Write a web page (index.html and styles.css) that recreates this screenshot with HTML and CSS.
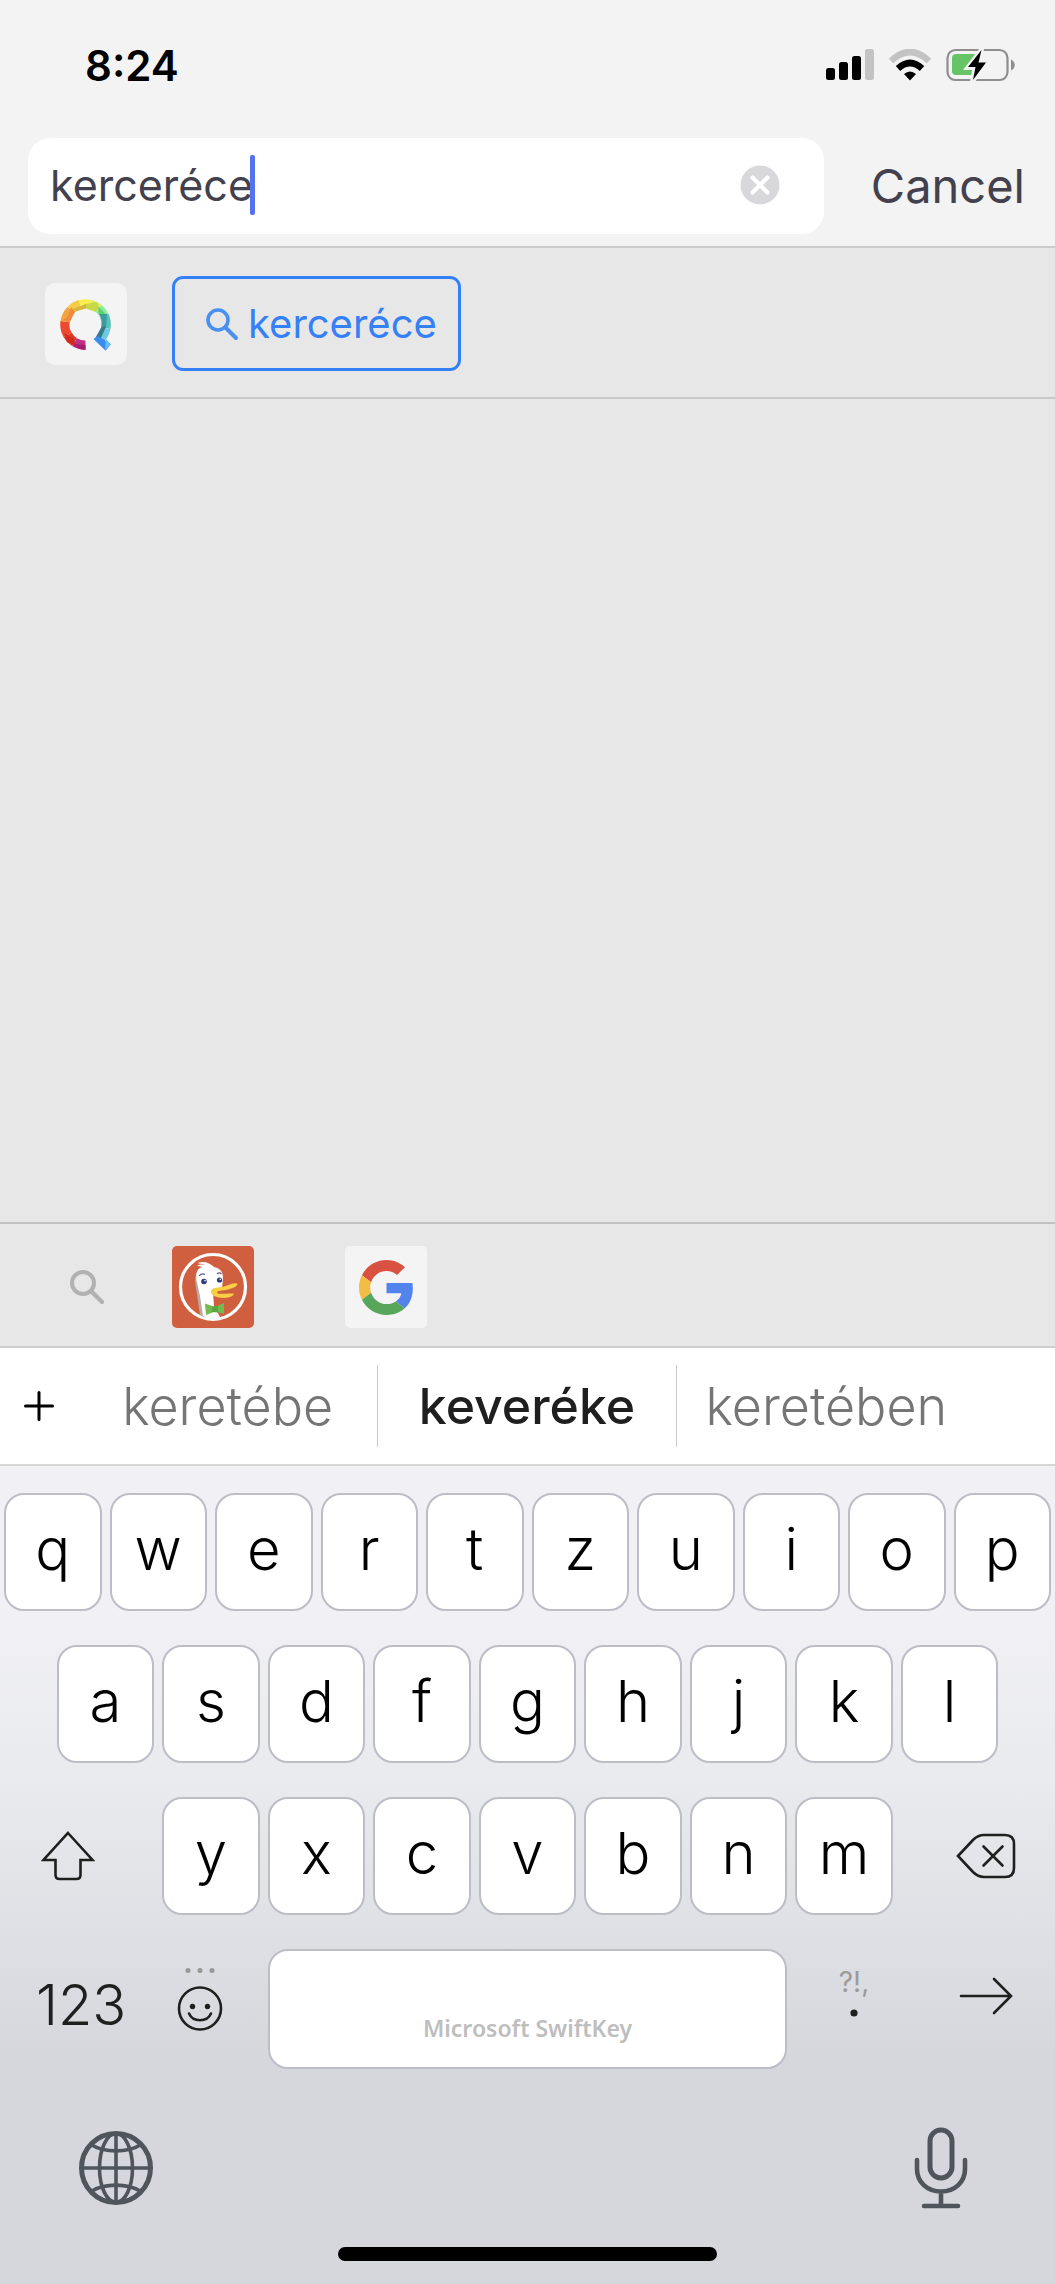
FILE: index.html
```
<!DOCTYPE html>
<html lang="hu">
<head>
<meta charset="utf-8">
<meta name="viewport" content="width=device-width, initial-scale=1">
<title>Search</title>
<link rel="stylesheet" href="styles.css">
</head>
<body>
<header class="top">
  <div class="status">
    <time class="status-time">8:24</time>
    <div class="status-icons">
      <svg width="48" height="32" viewBox="0 0 48 32" aria-hidden="true">
        <rect x="0" y="19" width="9" height="12" rx="2.500"/>
        <rect x="13" y="13" width="9" height="18" rx="2.500"/>
        <rect x="26" y="7" width="9" height="24" rx="2.500"/>
        <rect x="39" y="0" width="9" height="31" rx="2.500" fill="#c3c3c3"/>
      </svg>
      <svg width="44" height="32" viewBox="0 0 44 32" fill="none" aria-hidden="true">
        <path d="M3 12Q22 -6 41 12" stroke="#c3c3c3" stroke-width="6.500"/>
        <path d="M10 19.500Q22 8.500 34 19.500" stroke="#000" stroke-width="6.500"/>
        <path d="M16 25Q22 20 28 25L22 31.500Z" fill="#000"/>
      </svg>
      <svg width="70" height="34" viewBox="0 0 70 34" aria-hidden="true">
        <rect x="1.500" y="2" width="60" height="30" rx="8" fill="none" stroke="#8e8e8e" stroke-width="2.200"/>
        <path d="M65 11.500C70 14 70 20 65 22.500Z" fill="#8e8e8e"/>
        <rect x="6" y="6" width="26" height="21" rx="4" fill="#65c466"/>
        <path d="M33 1L17 22H26L24 34H29L43 14H36L38 1Z" fill="#f3f3f3"/>
        <path d="M35.500 2L22 19H29.500L27 32L40 14.500H32.500Z"/>
      </svg>
    </div>
  </div>
  <form class="search">
    <div class="field">
      <input class="field-input" type="text" aria-label="Search or enter address" value="kerceréce">
      <span class="caret"></span>
      <button class="clear" type="button" aria-label="Clear">
        <svg width="40" height="40" viewBox="0 0 40 40"><circle cx="20" cy="20" r="19.500" fill="#d8d8db"/><path d="M12.500 12.500L27.500 27.500M27.500 12.500L12.500 27.500" stroke="#fff" stroke-width="4.200" stroke-linecap="round"/></svg>
      </button>
    </div>
    <button class="cancel" type="button">Cancel</button>
  </form>
</header>

<main class="results">
  <section class="suggest">
    <span class="tile">
      <svg width="82" height="82" viewBox="0 0 82 82" fill="none" stroke-width="9.200" role="img" aria-label="Qwant">
        <path d="M40.500 62.200A20.700 20.700 0 0 1 29.500 59.100" stroke="#bf3187"/>
        <path d="M29.500 59.100A20.700 20.700 0 0 1 22.600 51.900" stroke="#e23a28"/>
        <path d="M22.600 51.900A20.700 20.700 0 0 1 20 38.600" stroke="#eb4930"/>
        <path d="M20 38.600A20.700 20.700 0 0 1 25.900 26.900" stroke="#f2a63f"/>
        <path d="M25.900 26.900A20.700 20.700 0 0 1 35.100 21.500" stroke="#f6cb45"/>
        <path d="M35.100 21.500A20.700 20.700 0 0 1 45.900 21.500" stroke="#f9ee4e"/>
        <path d="M45.900 21.500A20.700 20.700 0 0 1 53.800 25.600" stroke="#d8f060"/>
        <path d="M53.800 25.600A20.700 20.700 0 0 1 59.300 32.800" stroke="#8eee98"/>
        <path d="M59.300 32.800A20.700 20.700 0 0 1 60.900 45.100" stroke="#54c3b8"/>
        <path d="M60.900 45.100A20.700 20.700 0 0 1 55.100 56.100" stroke="#6ccbdc"/>
        <g stroke="none">
          <path d="M18 37L24.500 40L30 28.500L26 24L23 33Z" fill="#f08a3c"/>
          <path d="M28 26L41 21L52 19L54 25L51 29L41 25.500L31 28Z" fill="#c9d84a"/>
          <path d="M28 26L41 21L41 25.500L31 28Z" fill="#d9b33f"/>
          <path d="M53.500 23.500L61 31.500L53.500 31Z" fill="#5bd070"/>
          <path d="M54 31H62L61 44L55 57L51 54L56.500 45L57 37Z" fill="#3f9aa0"/>
          <path d="M61 43L55 57L51 54L56.500 44Z" fill="#377a90"/>
          <path d="M19 50L28 55L31 63L22 59Z" fill="#d02a20"/>
          <path d="M28 61L40.500 62V67L34 66Z" fill="#a61d6f"/>
          <path d="M48.500 56L52 53L58 56L65.700 61.300L60.600 67.700Z" fill="#3a8cf0"/>
          <path d="M60 67L61 56L65.700 61.300Z" fill="#5cc3fb"/>
        </g>
      </svg>
    </span>
    <button class="chip" type="button">
      <svg width="34" height="34" viewBox="0 0 34 34" fill="none" stroke="#4a8ff2" stroke-linecap="round" aria-hidden="true"><circle cx="13" cy="13" r="10" stroke-width="3.600"/><path d="M20.500 20.500L31 31" stroke-width="4"/></svg>
      <span>kerceréce</span>
    </button>
  </section>
  <section class="empty"></section>
  <nav class="engines" aria-label="Search engines">
    <button class="engine engine-plain" type="button" aria-label="Search settings">
      <svg width="36" height="36" viewBox="0 0 36 36" fill="none" stroke="#b1b1b1" stroke-linecap="round"><circle cx="14" cy="14" r="11" stroke-width="4"/><path d="M22 22L33 33" stroke-width="4.200"/></svg>
    </button>
    <button class="engine engine-duck" type="button" aria-label="DuckDuckGo">
      <svg width="82" height="82" viewBox="0 0 82 82">
        <circle cx="41" cy="41" r="32.500" fill="none" stroke="#fff" stroke-width="3.200"/>
        <path d="M24 27L23 35L28 69L32 71L28 30Z" fill="#b9aaa4"/>
        <path d="M25 20C28 18 31 18.500 33 19C31 17.500 27 18 25.500 17C32 14.500 38 17 42 21C48 22 51 26 51 32L50 42L41 46L42 60L48 71C43 73.500 36 73 31 70L28 50L24.500 34C23.500 26 26 22 30 21C28 20 26 20 25 20Z" fill="#fff"/>
        <path d="M27 30C29 27.500 31 27.500 33 28.500M45 28C46.500 26.500 48.500 27 49.500 28" fill="none" stroke="#5b5f9a" stroke-width="1.200"/>
        <circle cx="32" cy="35.500" r="2.800" fill="#2e3c80"/><circle cx="47.500" cy="34" r="2.600" fill="#2e3c80"/>
        <circle cx="33" cy="34.600" r=".8" fill="#fff"/><circle cx="48.300" cy="33.200" r=".8" fill="#fff"/>
        <path d="M39 45C40 41.500 46 41.500 52 40.500C57 39 61 36.500 65 37.500C67 39.500 60 43 54 44C49 45 45 45 45 46.500C46 49 55 47 61 47.500C64 48.500 58 52 52 52C44 52 38 49 39 45Z" fill="#f8cf47"/>
        <path d="M33 57.500L43 61L52 57V68L43 65.500L34 69Z" fill="#72bb50"/>
        <path d="M40 60.500L46 60V66.500L40 66Z" fill="#5ba63e"/>
      </svg>
    </button>
    <button class="engine engine-google" type="button" aria-label="Google">
      <svg width="55" height="55" viewBox="0 0 48 48">
        <path fill="#d95140" d="M24 9.500c3.540 0 6.710 1.220 9.210 3.600l6.850-6.850C35.900 2.380 30.470 0 24 0 14.620 0 6.510 5.380 2.560 13.220l7.980 6.190C12.430 13.720 17.740 9.500 24 9.500z"/>
        <path fill="#5383ec" d="M46.980 24.550c0-1.570-.15-3.090-.38-4.550H24v9.020h12.940c-.58 2.960-2.260 5.480-4.780 7.180l7.730 6c4.510-4.180 7.090-10.360 7.090-17.650z"/>
        <path fill="#f1bd42" d="M10.530 28.590c-.48-1.450-.76-2.990-.76-4.590s.27-3.140.76-4.590l-7.980-6.190C.92 16.460 0 20.120 0 24c0 3.880.92 7.540 2.560 10.780l7.970-6.190z"/>
        <path fill="#58a65c" d="M24 48c6.480 0 11.930-2.130 15.890-5.810l-7.730-6c-2.150 1.450-4.920 2.300-8.160 2.300-6.260 0-11.570-4.220-13.470-9.910l-7.980 6.190C6.510 42.620 14.620 48 24 48z"/>
      </svg>
    </button>
  </nav>
</main>

<div class="candidates">
  <button class="more" type="button" aria-label="Open toolbar">
    <svg width="30" height="30" viewBox="0 0 30 30" stroke="#000" stroke-width="3" stroke-linecap="round"><path d="M15 1.500V28.500M1.500 15H28.500"/></svg>
  </button>
  <button class="candidate" type="button">keretébe</button>
  <button class="candidate candidate-main" type="button">keveréke</button>
  <button class="candidate" type="button">keretében</button>
</div>

<section class="keyboard" aria-label="Keyboard">
  <div class="row">
    <button class="key">q</button><button class="key">w</button><button class="key">e</button><button class="key">r</button><button class="key">t</button><button class="key">z</button><button class="key">u</button><button class="key">i</button><button class="key">o</button><button class="key">p</button>
  </div>
  <div class="row row-home">
    <button class="key">a</button><button class="key">s</button><button class="key">d</button><button class="key">f</button><button class="key">g</button><button class="key">h</button><button class="key">j</button><button class="key">k</button><button class="key">l</button>
  </div>
  <div class="row">
    <button class="fn fn-wide toward-left" aria-label="Shift">
      <svg width="54" height="50" viewBox="0 0 54 50" fill="none" stroke="#1e1f1e" stroke-width="2.600"><path d="M27 2L51.500 29H39.500V44Q39.500 48 35.500 48H18.500Q14.500 48 14.500 44V29H2.500Z"/></svg>
    </button>
    <button class="key">y</button><button class="key">x</button><button class="key">c</button><button class="key">v</button><button class="key">b</button><button class="key">n</button><button class="key">m</button>
    <button class="fn fn-wide toward-right" aria-label="Backspace">
      <svg width="60" height="46" viewBox="0 0 60 46" fill="none" stroke="#1e1f1e" stroke-width="2.600" stroke-linecap="round"><path d="M2 23L17 7Q22 2 28 2H49Q58 2 58 11V35Q58 44 49 44H28Q22 44 17 39Z"/><path d="M27.500 13.500L46.500 32.500M46.500 13.500L27.500 32.500"/></svg>
    </button>
  </div>
  <div class="row">
    <button class="fn fn-wide fn-text">123</button>
    <button class="fn fn-emoji toward-left" aria-label="Emoji">
      <svg width="46" height="64" viewBox="0 0 46 64" fill="none" stroke="#1e1f1e" stroke-width="2.600" stroke-linecap="round"><g fill="#979797" stroke="none"><circle cx="11" cy="3.500" r="2.500"/><circle cx="23" cy="3.500" r="2.500"/><circle cx="35" cy="3.500" r="2.500"/></g><circle cx="23" cy="41.500" r="21"/><path d="M12 46.500C16 55.500 30 55.500 34 46.500"/><g fill="#1e1f1e" stroke="none"><circle cx="15.500" cy="39.500" r="2.700"/><circle cx="30.500" cy="39.500" r="2.700"/></g></svg>
    </button>
    <button class="key key-space">Microsoft SwiftKey</button>
    <button class="fn fn-punct toward-right"><span class="hint">?!,</span><svg width="8" height="8" viewBox="0 0 8 8" role="img" aria-label="Period"><circle cx="4" cy="4" r="3.600" fill="#1e1f1e"/></svg></button>
    <button class="fn fn-wide fn-go toward-right" aria-label="Go">
      <svg width="54" height="38" viewBox="0 0 54 38" fill="none" stroke="#1e1f1e" stroke-width="2.600" stroke-linecap="round"><path d="M2 19H51M35 2L52 19L35 36"/></svg>
    </button>
  </div>
  <div class="dock">
    <button class="dock-button" aria-label="Next keyboard">
      <svg width="74" height="76" viewBox="0 0 74 76" fill="none" stroke="#50555c" stroke-width="3.600"><circle cx="37" cy="38" r="34.500" stroke-width="5"/><path d="M37 3V73M2 38H72"/><ellipse cx="37" cy="38" rx="16.500" ry="34.500"/><path d="M12 14.500C25 23 49 23 62 14.500M12 61.500C25 53 49 53 62 61.500"/></svg>
    </button>
    <button class="dock-button" aria-label="Dictate">
      <svg width="54" height="82" viewBox="0 0 54 82" fill="none" stroke="#50555c" stroke-width="5" stroke-linecap="round"><rect x="16" y="3" width="22" height="48" rx="11"/><path d="M3 33V42C3 55 13 64.500 27 64.500S51 55 51 42V33M27 65V78M10 79H44" stroke-width="4.600"/></svg>
    </button>
  </div>
  <div class="home-bar"></div>
</section>
</body>
</html>
```
FILE: styles.css
```
* { box-sizing: border-box; }

body {
  margin: 0;
  min-height: 100vh;
  display: flex;
  flex-direction: column;
  background: #e7e7e7;
  color: #000;
  font-family: Inter, "Liberation Sans", sans-serif;
}

button {
  margin: 0;
  padding: 0;
  border: 0;
  background: none;
  color: inherit;
  font: inherit;
}

svg { display: block; flex: none; }

/* Status bar and address field */
.top {
  background: #f3f3f3;
  border-bottom: 2px solid #cbcbcb;
}

.status {
  display: flex;
  justify-content: space-between;
  align-items: center;
  height: 138px;
  padding: 0 39px 8px 85px;
}

.status-time { font-size: 42px; font-weight: 600; }

.status-icons { display: flex; align-items: center; gap: 14px; }

.search {
  display: flex;
  align-items: center;
  gap: 47px;
  padding: 0 30px 12px 28px;
}

.field {
  flex: 1;
  min-width: 0;
  display: flex;
  align-items: center;
  height: 96px;
  padding: 0 44px 2px 22px;
  border-radius: 22px;
  background: #fff;
}

.field-input {
  field-sizing: content;
  padding: 0;
  border: 0;
  outline: 0;
  background: none;
  color: #42414d;
  font: 400 43px/56px Inter, "Liberation Sans", sans-serif;
}

.caret {
  width: 5px;
  height: 60px;
  margin-left: -3px;
  border-radius: 2px;
  background: #5573ec;
}

.clear { margin-left: auto; }

.cancel { color: #42414d; font-size: 47px; line-height: 64px; }

/* Suggestions */
.results { flex: 1; display: flex; flex-direction: column; }

.suggest {
  display: flex;
  align-items: center;
  gap: 45px;
  padding: 28px 45px 26px;
  border-bottom: 2px solid #c8c8c8;
}

.tile { border-radius: 10px; background: #f4f4f4; }

.chip {
  display: flex;
  align-items: center;
  gap: 9px;
  height: 95px;
  padding: 0 21px 0 30px;
  border: 3px solid #3580f7;
  border-radius: 11px;
  color: #3580f7;
  font-size: 40px;
}

.empty { flex: 1; border-bottom: 2px solid #c2c2c2; }

.engines {
  display: flex;
  gap: 91px;
  height: 124px;
  padding: 22px 0 0 46px;
  border-bottom: 2px solid #cecece;
}

.engine {
  display: flex;
  justify-content: center;
  align-items: center;
  width: 82px;
  height: 82px;
  border-radius: 5px;
}

.engine-plain { margin-right: -47px; }
.engine-duck { background: #cf5f3e; }
.engine-google { background: #f4f4f4; }

/* Word predictions */
.candidates {
  display: grid;
  grid-template-columns: 78px 1fr 1fr 1fr 79px;
  align-items: center;
  height: 118px;
  border-bottom: 2px solid #d6d6d6;
  background: #fff;
}

.more { justify-self: center; }

.candidate {
  height: 82px;
  color: #757575;
  font-size: 52px;
  font-weight: 300;
}

.candidate-main {
  border: solid #c9c9c9;
  border-width: 0 1px;
  color: #1e1f1e;
  font-size: 50px;
  font-weight: 500;
}

/* Keys */
.keyboard {
  padding: 27px 0 23px;
  background: linear-gradient(#f0f0f5 150px, #e9eaee 320px, #dedfe4 480px, #d6d7dc 590px);
}

.row {
  display: grid;
  grid-template-columns: repeat(20, 1fr);
  margin-bottom: 34px;
}

.row-home { padding: 0 5%; grid-template-columns: repeat(18, 1fr); }

.key {
  grid-column: span 2;
  height: 118px;
  margin: 0 4px;
  padding-bottom: 6px;
  border: 2px solid #bcbdc6;
  border-radius: 20px;
  background: #fff;
  font-size: 58px;
  font-weight: 300;
}

.key-space {
  grid-column: span 10;
  height: 120px;
  padding: 38px 0 0;
  color: #bebebe;
  font: 600 23px "Noto Sans", "Open Sans", sans-serif;
}

.fn {
  grid-column: span 2;
  display: flex;
  flex-direction: column;
  justify-content: center;
  align-items: center;
  color: #1e1f1e;
}

.fn-wide { grid-column: span 3; }
.toward-left { padding-right: 22px; }
.toward-right { padding-left: 20px; }
.fn-text { padding: 0 0 8px 4px; font-size: 56px; font-weight: 300; }
.fn-emoji { padding-bottom: 20px; }
.fn-punct { padding-bottom: 36px; gap: 11px; }
.fn-go { padding-bottom: 26px; }

.hint { color: #9b9b9b; font-size: 28px; line-height: 32px; }

.dock {
  display: flex;
  justify-content: space-between;
  align-items: center;
  padding: 24px 87px 38px 79px;
}

.home-bar {
  width: 36%;
  height: 14px;
  margin: 0 auto;
  border-radius: 7px;
  background: #000;
}
```
